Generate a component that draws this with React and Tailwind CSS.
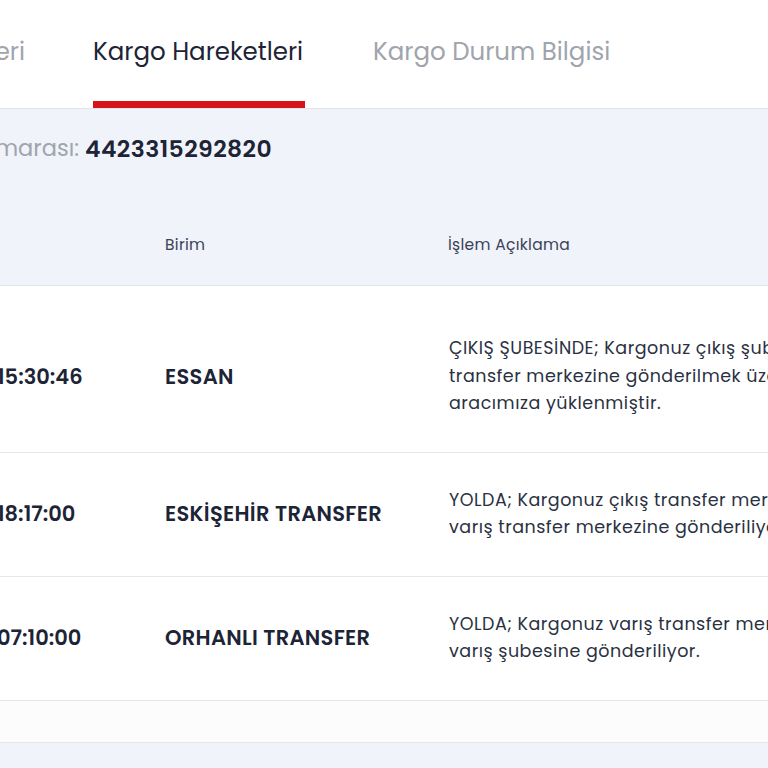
import React from "react";

const rows = [
  {
    date: "11.03.2024",
    time: "15:30:46",
    unit: "ESSAN",
    lines: [
      "ÇIKIŞ ŞUBESİNDE; Kargonuz çıkış şubesinden çıkış",
      "transfer merkezine gönderilmek üzere transfer",
      "aracımıza yüklenmiştir.",
    ],
    pad: "pt-[49px] pb-[34px]",
  },
  {
    date: "11.03.2024",
    time: "18:17:00",
    unit: "ESKİŞEHİR TRANSFER",
    lines: [
      "YOLDA; Kargonuz çıkış transfer merkezinden çıkış yaptı,",
      "varış transfer merkezine gönderiliyor.",
    ],
    pad: "py-[34px]",
  },
  {
    date: "12.03.2024",
    time: "07:10:00",
    unit: "ORHANLI TRANSFER",
    lines: [
      "YOLDA; Kargonuz varış transfer merkezinden çıkış yaptı,",
      "varış şubesine gönderiliyor.",
    ],
    pad: "py-[34px]",
  },
];

export default function App() {
  return (
    <div className="w-[768px] h-[768px] overflow-hidden bg-[#f0f3fa] font-['Poppins','Open_Sans',sans-serif] text-[#1c2436]">
      {/* tabs */}
      <div className="h-[109px] bg-white border-b border-[#e1e3e7] flex gap-[68px]">
        <div className="w-[25px] flex justify-end pt-[34px]">
          <span className="whitespace-nowrap text-[24.5px] leading-[36px] text-[#a0a4ad]">Gönderi Bilgileri</span>
        </div>
        <div className="w-[212px] flex flex-col pt-[34px]">
          <span className="whitespace-nowrap text-[24.5px] leading-[36px] text-[#1c2436]">Kargo Hareketleri</span>
          <div className="mt-auto h-[7px] bg-[#d6121b]" />
        </div>
        <div className="pt-[34px]">
          <span className="whitespace-nowrap text-[24.5px] leading-[36px] text-[#a0a4ad]">Kargo Durum Bilgisi</span>
        </div>
      </div>

      {/* tracking number */}
      <div className="h-[80px] flex items-center">
        <div className="w-[85px] flex justify-end pr-[6px]">
          <span className="whitespace-nowrap text-[22.5px] text-[#a0a4ad]">Kargo Takip Numarası:</span>
        </div>
        <span className="text-[23.5px] font-semibold tracking-[0.4px]">4423315292820</span>
      </div>

      {/* table header */}
      <div className="h-[97px] border-b border-[#e1e3e7] flex pt-[47px] text-[15.5px] leading-[18px] tracking-[0.3px] text-[#3a4256]">
        <div className="w-[165px] flex justify-end">
          <span className="w-[300px] shrink-0 whitespace-nowrap">Tarih</span>
        </div>
        <div className="w-[283px]">Birim</div>
        <div>İşlem Açıklama</div>
      </div>

      {/* rows */}
      {rows.map((r) => (
        <div key={r.time} className={`bg-white border-b border-[#e4e6ea] flex items-center ${r.pad}`}>
          <div className="w-[165px] shrink-0 flex justify-end text-[21px] font-semibold">
            <span className="whitespace-nowrap pr-[8px]">{r.date}</span>
            <span className="w-[168px] shrink-0 whitespace-nowrap">{r.time}</span>
          </div>
          <div className="w-[284px] shrink-0 text-[21px] tracking-[0.3px] font-semibold whitespace-nowrap">{r.unit}</div>
          <div className="text-[17.5px] leading-[27.5px] tracking-[0.5px] text-[#2a3142] whitespace-nowrap">
            {r.lines.map((l) => (
              <div key={l}>{l}</div>
            ))}
          </div>
        </div>
      ))}
      <div className="h-[42px] bg-[#fcfcfc] border-b border-[#e4e6ea]" />
    </div>
  );
}
